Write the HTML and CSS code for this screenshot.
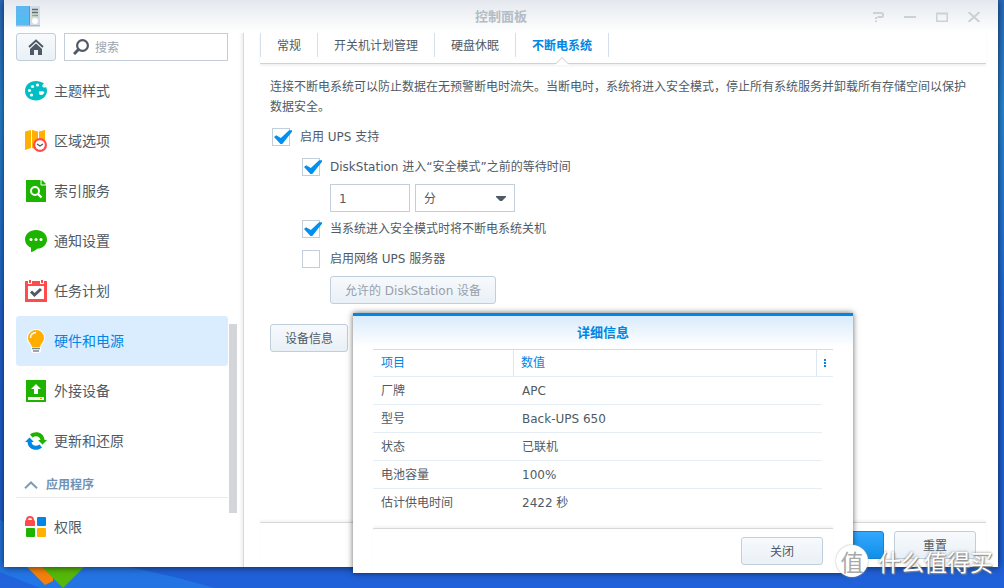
FILE: index.html
```html
<!DOCTYPE html>
<html lang="zh-CN">
<head>
<meta charset="utf-8">
<meta name="viewport" content="width=device-width, initial-scale=1">
<title>控制面板</title>
<link rel="stylesheet" href="styles.css">
</head>
<body>
<div class="desktop">
  <svg class="wallpaper" viewBox="0 0 1004 588" preserveAspectRatio="none" aria-hidden="true">
    <path d="M0 520 Q20 529 80 552 Q150 577 215 588 H0Z" fill="#2376e6"/>
    <path d="M60 556 Q140 566 215 588 H60Z" fill="#2474e4"/>
    <path d="M0 572 L40 588 H0Z" fill="#2263dc"/>
  </svg>
  <svg class="tiles" width="60" height="24" viewBox="0 0 60 24" aria-hidden="true">
    <path d="M0 3h26v14L18 21Z" fill="#f5800a"/>
    <path d="M15 3h42L36 24Z" fill="#55b80a"/>
  </svg>

  <div class="window">
    <header class="titlebar">
      <svg class="app-icon" width="24" height="21" viewBox="0 0 24 21" aria-hidden="true">
        <path d="M0 0h14v20H0z" fill="#5db8f2"/>
        <path d="M14 0h10v20H14z" fill="#d5dbe1"/>
        <path d="M13 0h1v20h-1z" fill="#3f9fe0"/>
        <path d="M0 19h24v1.500H0z" fill="#a9bfce"/>
        <path d="M1 5.500h2M5 5.500h6M1 10h2M5 10h7M1 14.500h2M5 14.500h6" stroke="#36c8ea"/>
        <path d="M16 3.500h6M16 6.500h6" stroke="#5d6b78" stroke-width="1.500"/>
        <path d="M16 9.500h3" stroke="#7ac943" stroke-width="1.500"/>
        <path d="M19 9.500h3" stroke="#8996a2" stroke-width="1.500"/>
        <circle cx="19" cy="15" r="3" fill="#fff"/>
      </svg>
      <h1 class="title">控制面板</h1>
      <div class="controls">
        <button class="control" aria-label="帮助"><svg width="12" height="10" viewBox="0 0 12 10"><path d="M1 1h8.500q1.500 0 1.500 1.500v1q0 1.500-1.500 1.500H5.500M4 5v2M4 8.500v1.500" /></svg></button>
        <button class="control" aria-label="最小化"><svg width="12" height="10" viewBox="0 0 12 10"><path d="M0 5h12"/></svg></button>
        <button class="control" aria-label="最大化"><svg width="12" height="10" viewBox="0 0 12 10"><path d="M.5 1v8.500h11V1" stroke-width="1"/><path d="M0 1.500h12" stroke-width="3"/></svg></button>
        <button class="control" aria-label="关闭窗口"><svg width="12" height="10" viewBox="0 0 12 10"><path d="M.5 0l11 10M11.500 0L.5 10" stroke-width="1.500"/></svg></button>
      </div>
    </header>

    <div class="body">
      <aside class="sidebar">
        <div class="tools">
          <button class="btn home" aria-label="主页"><svg width="16" height="16" viewBox="0 0 16 16"><path d="M1 8l7-6.500L15 8" fill="none" stroke="#505a64" stroke-width="2"/><path d="M2 9.500l6-5.500 6 5.500V16H10v-5H6v5H2z" fill="#505a64"/><path d="M1.500 10L8 4l6.500 6" fill="none" stroke="#f0f5f9" stroke-width=".8"/></svg></button>
          <label class="search">
            <svg width="16" height="16" viewBox="0 0 16 16" aria-hidden="true"><circle cx="9.500" cy="6.500" r="5.400" fill="none" stroke="#505a64" stroke-width="2.200"/><path d="M5.500 10.500L1 15" stroke="#505a64" stroke-width="3"/></svg>
            <input type="text" placeholder="搜索" aria-label="搜索">
          </label>
        </div>
        <nav class="nav">
          <a class="item" href="#"><svg width="22" height="22" viewBox="0 0 22 22"><path d="M11 1C4.500 1 0 5.300 0 11s5 9.500 11 9.500S22 16 22 11c0-1.500-.4-3-1-4-1 .9-3 .8-3.500-.5S18 4 19 3.500C17 2 14 1 11 1z" fill="#00bfc4"/><g fill="#fff"><circle cx="7.500" cy="6.500" r="1.600"/><circle cx="12.500" cy="5" r="1.600"/><circle cx="4.500" cy="10.500" r="1.600"/><circle cx="6.500" cy="15" r="1.600"/><path d="M14 11.500q4-.8 5.500.5-1 3-3.500 3t-2-3.500z"/></g></svg>主题样式</a>
          <a class="item" href="#"><svg width="22" height="22" viewBox="0 0 22 22"><path d="M0 1.500L6 0v18l-6 2zM7 0l6 1.500V20l-6-2zM14 1.500L20 0v12h-6z" fill="#ffb000"/><circle cx="15" cy="15" r="7" fill="#ff4b4b"/><circle cx="15" cy="15" r="4.800" fill="#fff"/><path d="M12 14l3 2 3-2" fill="none" stroke="#505a64" stroke-width="1.300"/></svg>区域选项</a>
          <a class="item" href="#"><svg width="22" height="22" viewBox="0 0 22 22"><path d="M1 0h15l5 5v17H1z" fill="#1db400"/><path d="M17 0l4 4h-4z" fill="#1db400"/><path d="M16 0v5h5" fill="none" stroke="#fff"/><circle cx="10" cy="11" r="4" fill="none" stroke="#fff" stroke-width="2"/><path d="M13 14l3.500 3.500" stroke="#fff" stroke-width="2.400"/></svg>索引服务</a>
          <a class="item" href="#"><svg width="22" height="22" viewBox="0 0 22 22"><path d="M11 0C5 0 0 4 0 9.500c0 3.700 2 6.500 6 8.200V22c3-.5 5-2 6-3.200 6-.3 10-4.200 10-9.300C22 4 17 0 11 0z" fill="#1db400"/><g fill="#fff"><circle cx="6" cy="9.500" r="1.500"/><circle cx="11" cy="9.500" r="1.500"/><circle cx="16" cy="9.500" r="1.500"/></g></svg>通知设置</a>
          <a class="item" href="#"><svg width="22" height="22" viewBox="0 0 22 22"><path d="M0 1h22v21H0z" fill="#ff4b4b"/><path d="M3 6h16v13H3z" fill="#fff"/><path d="M3 0h4v4H3zM15 0h4v4h-4z" fill="#fff"/><path d="M4 0h2v3H4zM16 0h2v3h-2z" fill="#ff4b4b"/><path d="M6 11.500l3.500 3.500L16 9" fill="none" stroke="#505a64" stroke-width="3"/></svg>任务计划</a>
          <a class="item active" href="#" aria-current="page"><svg width="22" height="24" viewBox="0 0 22 24"><path d="M11 0a9 9 0 0 0-9 9c0 4 2 5 4 8v6l3 1h4l3-1v-6c2-3 4-4 4-8a9 9 0 0 0-9-9z" fill="#fff"/><path d="M11 1a8 8 0 0 0-8 8c0 4 3 5 4 9h8c1-4 4-5 4-9a8 8 0 0 0-8-8z" fill="#ffae00"/><path d="M5.500 9Q5.500 4 11 3.500" fill="none" stroke="#fff" stroke-width="1.500"/><path d="M7 19.500h8M8 22h6" stroke="#7d8791" stroke-width="1.300"/></svg>硬件和电源</a>
          <a class="item" href="#"><svg width="22" height="22" viewBox="0 0 22 22"><path d="M1 0h20v22H1z" fill="#1db400"/><path d="M11 4l5 5h-3v5H9V9H6z" fill="#fff"/><path d="M3 17h16v3H3z" fill="#fff"/><path d="M15 18h2v1h-2z" fill="#ff9800"/></svg>外接设备</a>
          <a class="item" href="#"><svg width="22" height="22" viewBox="0 0 22 22"><path d="M5 4.500C10 0 19 2 19.500 10H22l-4.500 4.500L13 10h2.500c-.5-4-5-5-8-2.500z" fill="#1db400"/><path d="M17 17.500C12 22 3 20 2.500 12H0l4.500-4.500L9 12H6.500c.5 4 5 5 8 2.500z" fill="#0086e5"/></svg>更新和还原</a>
          <button class="group"><svg width="14" height="8" viewBox="0 0 14 8"><path d="M1 7.200L7 1.500l6 5.700" fill="none" stroke="#7d9db8" stroke-width="2"/></svg>应用程序</button>
          <a class="item" href="#"><svg width="22" height="22" viewBox="0 0 22 22"><path d="M0 5l1-1q0-4 4-4t4 4l1 1v5H0z" fill="#ff4b4b"/><path d="M3 4q0-2 2-2t2 2z" fill="#fff"/><rect x="12" y="1" width="9" height="9" rx="1" fill="#0086e5"/><rect x="1" y="12" width="9" height="9" rx="1" fill="#1db400"/><rect x="12" y="12" width="9" height="9" rx="1" fill="#ffb000"/></svg>权限</a>
        </nav>
        <div class="scroll-thumb"></div>
      </aside>

      <main class="content">
        <nav class="tabs">
          <a class="tab" href="#">常规</a>
          <a class="tab" href="#">开关机计划管理</a>
          <a class="tab" href="#">硬盘休眠</a>
          <a class="tab selected" href="#" aria-current="page">不断电系统<svg class="notch" width="14" height="8" viewBox="0 0 14 8" aria-hidden="true"><path d="M0 8L1 6.500 7 .7l6 5.800 1 1.500z" fill="#fff"/><path d="M0 6.500h1L7 .7l6 5.800h1" fill="none" stroke="#ccc"/></svg></a>
        </nav>
        <form class="form">
          <p class="intro">连接不断电系统可以防止数据在无预警断电时流失。当断电时，系统将进入安全模式，停止所有系统服务并卸载所有存储空间以保护数据安全。</p>
          <label class="check wide-gap"><input type="checkbox" checked>启用 UPS 支持</label>
          <div class="nested">
            <label class="check"><input type="checkbox" checked>DiskStation 进入“安全模式”之前的等待时间</label>
            <div class="fields">
              <input class="field" type="text" value="1" aria-label="等待时间">
              <span class="select-wrap">
                <select class="field unit" aria-label="时间单位"><option>分</option></select>
                <svg class="caret" width="12" height="6" viewBox="0 0 12 6" aria-hidden="true"><path d="M1 0h10v1L7 5H5L1 1z" fill="#505a64"/></svg>
              </span>
            </div>
            <label class="check wide-gap"><input type="checkbox" checked>当系统进入安全模式时将不断电系统关机</label>
            <label class="check"><input type="checkbox">启用网络 UPS 服务器</label>
            <button class="btn permitted" type="button" disabled>允许的 DiskStation 设备</button>
          </div>
          <button class="btn info" type="button">设备信息</button>
        </form>
        <footer class="actions">
          <button class="btn wide primary" aria-label="应用"></button>
          <button class="btn wide">重置</button>
        </footer>
      </main>
    </div>
  </div>

  <section class="dialog" role="dialog" aria-labelledby="dialog-title">
    <h2 class="dialog-title" id="dialog-title">详细信息</h2>
    <table class="grid">
      <colgroup><col class="col-name"><col><col class="col-edge"><col class="col-menu"></colgroup>
      <thead>
        <tr><th>项目</th><th>数值</th><th class="menu" colspan="2"><button class="more" aria-label="列选项"><svg width="2" height="8" viewBox="0 0 2 8" shape-rendering="crispEdges"><path d="M0 0h2v2H0zM0 3h2v2H0zM0 6h2v2H0z" fill="#0086e5"/></svg></button></th></tr>
      </thead>
      <tbody>
        <tr><td>厂牌</td><td colspan="2">APC</td></tr>
        <tr><td>型号</td><td colspan="2">Back-UPS 650</td></tr>
        <tr><td>状态</td><td colspan="2">已联机</td></tr>
        <tr><td>电池容量</td><td colspan="2">100%</td></tr>
        <tr><td>估计供电时间</td><td colspan="2">2422 秒</td></tr>
      </tbody>
    </table>
    <footer class="dialog-actions"><button class="btn wide">关闭</button></footer>
  </section>

  <div class="watermark"><span class="seal">值</span><span>什么值得买</span></div>
</div>
</body>
</html>
```

FILE: styles.css
```css
* { box-sizing: border-box; }

body {
  margin: 0;
  color: #505a64;
  font: 12px/20px "DejaVu Sans", "Noto Sans CJK SC", sans-serif;
}

button, input, select { font: inherit; color: inherit; }
button { cursor: pointer; }
a { color: inherit; text-decoration: none; }
svg { display: block; flex: none; }

.desktop {
  position: relative;
  display: flex;
  height: 100vh;
  padding: 0 6px 21px 4px;
  overflow: hidden;
  background: linear-gradient(#2b6cc0, #2989d8 18%, #2166d6 55%, #2060d8);
}

.wallpaper { position: absolute; inset: 0; width: 100%; height: 100%; }
.tiles { position: absolute; left: 27px; bottom: 0; }

/* Window */
.window {
  position: relative;
  flex: 1;
  display: flex;
  flex-direction: column;
  min-width: 0;
  background: #fff;
  box-shadow: 0 0 8px rgba(0, 0, 0, .7);
}

.titlebar {
  display: grid;
  grid-template-columns: 1fr auto 1fr;
  align-items: center;
  height: 33px;
  padding: 0 12px;
  background: linear-gradient(#e4e8ee, #fff);
}

.title { margin: 0; color: #b4bcc6; font-size: 13px; }
.controls { display: flex; justify-content: flex-end; gap: 20px; padding-right: 6px; }
.control { padding: 0; border: 0; background: none; }
.control path { fill: none; stroke: #ccd1d7; stroke-width: 2; }

.body { flex: 1; display: flex; min-height: 0; }

/* Sidebar */
.sidebar {
  position: relative;
  flex: none;
  width: 240px;
  padding: 0 15px 0 12px;
  border-right: 1px solid #dadada;
  background: linear-gradient(to left, #f0f0f0, #fff 4px);
  overflow: hidden;
}

.tools { display: flex; gap: 8px; margin-bottom: 5px; }

.btn {
  height: 28px;
  padding: 2px 14px 0;
  border: 1px solid #c3cedb;
  border-radius: 3px;
  background: linear-gradient(#f7fafd, #e9f0f6);
  white-space: nowrap;
}

.btn:disabled { color: #98a0aa; cursor: default; }
.home { display: flex; align-items: center; justify-content: center; width: 40px; padding: 0; }

.search {
  flex: 1;
  display: flex;
  align-items: center;
  gap: 6px;
  min-width: 0;
  padding: 0 8px;
  border: 1px solid #c3cedb;
}

.search input { flex: 1; min-width: 0; padding: 2px 0 0; border: 0; outline: 0; background: none; }
.search input::placeholder { color: #9ba5b0; opacity: 1; }

.item {
  display: flex;
  align-items: center;
  gap: 7px;
  height: 50px;
  padding-left: 9px;
  border-radius: 3px;
  font-size: 14px;
}

.active { background: #d9edff; color: #0086e5; }

.group {
  display: flex;
  align-items: center;
  gap: 8px;
  width: 100%;
  height: 32px;
  margin-bottom: 4px;
  padding: 6px 8px 0;
  border: 0;
  border-bottom: 1px solid #ebebed;
  background: none;
  color: #7093b5;
  font-weight: bold;
}

.scroll-thumb {
  position: absolute;
  top: 291px;
  right: 6px;
  width: 8px;
  height: 189px;
  background: #d3d5d8;
}

/* Content */
.content {
  flex: 1;
  display: flex;
  flex-direction: column;
  min-width: 0;
  padding: 0 12px 0 16px;
}

.tabs {
  display: flex;
  height: 31px;
  border-bottom: 1px solid #d2d2d2;
  box-shadow: 0 2px 2px #f2f2f2;
}

.tab {
  position: relative;
  height: 24px;
  padding: 0 16px;
  border-left: 1px solid #d3dfea;
  line-height: 26px;
}

.tab:last-child { border-right: 1px solid #d3dfea; }
.selected { color: #0086e5; font-weight: bold; }
.notch { position: absolute; top: 24px; left: calc(50% - 7px); }

.form { flex: 1; padding: 13px 16px 0 10px; }
.intro { margin: 0 0 10px; }
.check { display: flex; align-items: center; gap: 10px; margin-bottom: 7px; }
.check.wide-gap { margin-bottom: 10px; }
.form > .check { padding-left: 2px; }
.nested { padding-left: 32px; }

.check input {
  position: relative;
  appearance: none;
  flex: none;
  width: 18px;
  height: 18px;
  margin: 0;
  border: 1px solid #c3cedb;
  background: #fff;
}

.check input:checked::after {
  content: "";
  position: absolute;
  top: 1px;
  left: 1px;
  width: 18px;
  height: 14px;
  background: #0090f0;
  clip-path: polygon(0 50%, 12% 38%, 38% 58%, 84% 2%, 100% 2%, 100% 12%, 46% 100%, 36% 100%);
}

.fields { display: flex; gap: 5px; margin: 0 0 7px 28px; }

.field {
  width: 80px;
  height: 28px;
  padding: 2px 8px 0;
  border: 1px solid #c3cedb;
  border-radius: 0;
  background: #fff;
}

.select-wrap { position: relative; }
.unit { appearance: none; width: 100px; }
.caret { position: absolute; top: 12px; right: 8px; pointer-events: none; }
.permitted { display: block; min-width: 166px; margin: 0 0 20px 28px; }
.info { min-width: 78px; }

.actions {
  display: flex;
  justify-content: flex-end;
  gap: 10px;
  padding: 8px 10px;
  border-top: 1px solid #d8d8d8;
  box-shadow: 0 -2px 2px #f5f5f5;
}

.wide { min-width: 82px; }
.primary { border-color: #1681cc; background: linear-gradient(#33a8ff, #108fe8); }

/* Detail dialog */
.dialog {
  position: absolute;
  top: 313px;
  left: 353px;
  width: 500px;
  padding: 0 20px;
  border-top: 3px solid #0086e5;
  background: linear-gradient(#d9ebfb, #fff 31px);
  box-shadow: 0 0 6px rgba(0, 0, 0, .6);
}

.dialog-title {
  margin: 0;
  color: #0086e5;
  font-size: 13px;
  line-height: 33px;
  text-align: center;
}

.grid {
  width: 100%;
  margin-bottom: 11px;
  border-top: 1px solid #d3dce5;
  border-spacing: 0;
  table-layout: fixed;
}

.col-name { width: 140px; }
.col-edge { width: 6px; }
.col-menu { width: 11px; }

.grid th, .grid td {
  height: 28px;
  padding: 0 8px;
  border-bottom: 1px solid #e6eef5;
  text-align: left;
}

.grid th { height: 27px; color: #0086e5; font-weight: normal; }
.grid th + th { border-left: 1px solid #dce7f2; padding-left: 7px; }
.grid td + td { padding-left: 9px; }
.grid tbody tr:last-child td { border-bottom-color: transparent; }
.grid .menu { padding: 0 7px; }
.more { display: block; padding: 0; border: 0; background: none; }

.dialog-actions {
  display: flex;
  justify-content: flex-end;
  padding: 8px 10px;
  border-top: 1px solid #d8d8d8;
  box-shadow: 0 -2px 2px #f5f5f5;
}

/* Watermark */
.watermark {
  position: absolute;
  right: 11px;
  bottom: 11px;
  display: flex;
  align-items: center;
  gap: 10px;
  color: #fff;
  font: 23px/32px "Noto Sans CJK SC", sans-serif;
  text-shadow: 0 0 3px #777, 1px 1px 1px #999;
  pointer-events: none;
}

.seal {
  width: 32px;
  border-radius: 50%;
  background: #fff;
  box-shadow: 0 0 2px #aaa;
  color: #aaa;
  text-align: center;
  text-shadow: none;
}
```
